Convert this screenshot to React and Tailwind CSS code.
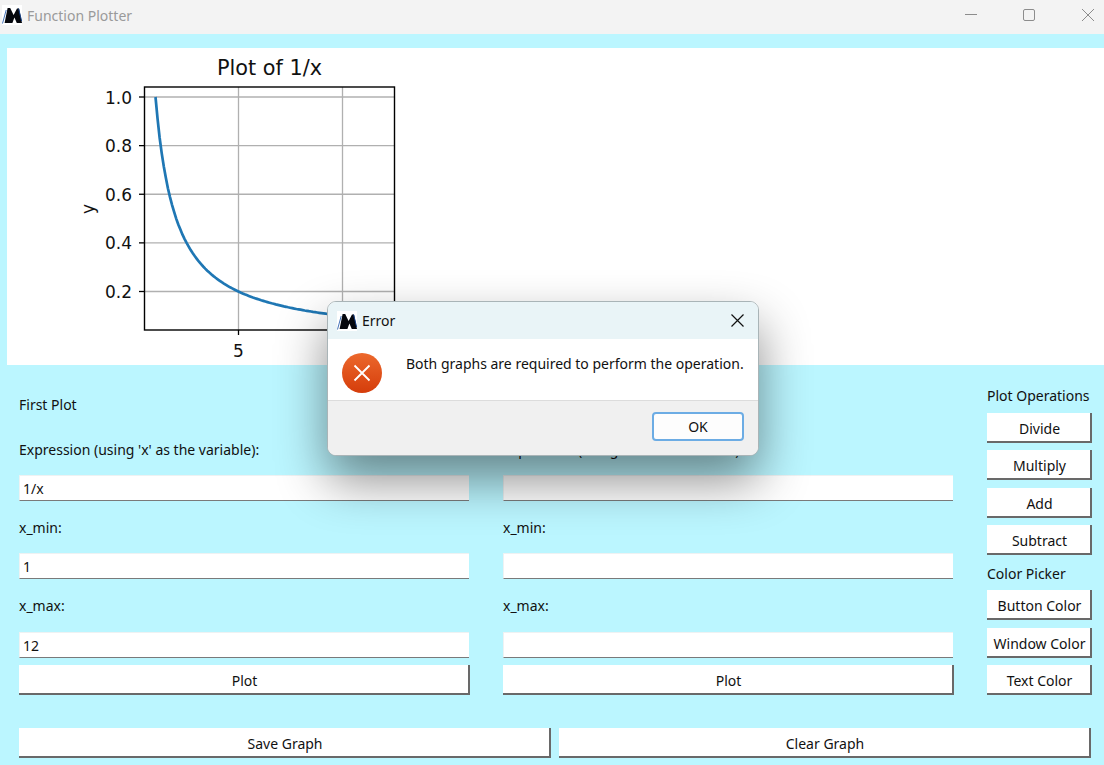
const Logo = ({ className }) => (
  <svg viewBox="0 0 20 20" className={className}>
    <rect width="20" height="20" fill="#fff" />
    <path d="M2.6 18 L5.6 3 L8.2 3 L11.6 10 L15 3.5 L17 3.5 L20 18 L14.8 18 L12.4 12.5 L10.4 18 Z" fill="#05070d" />
    <path d="M0.5 18.5 L4.2 5" stroke="#2f62b0" strokeWidth="0.9" fill="none" />
    <path d="M16.6 3.5 L19.6 16" stroke="#153f85" strokeWidth="1" fill="none" />
  </svg>
);

function Plot() {
  const pts = [];
  const px = (x) => 155.5 + ((x - 1) / 11) * 228;
  const py = (y) => 97 + ((1 - y) / 0.8) * 194.5;
  for (let x = 1; x <= 12; x += 0.1) pts.push(`${px(x).toFixed(1)},${py(1 / x).toFixed(1)}`);
  const ys = [1, 0.8, 0.6, 0.4, 0.2];
  return (
    <svg width="1097" height="317" viewBox="7 48 1097 317" className="block w-full h-full">
      <g stroke="#b0b0b0" strokeWidth="1.3">
        {ys.map((y) => <line key={y} x1="144" x2="394" y1={py(y)} y2={py(y)} />)}
        <line x1="238.5" x2="238.5" y1="87" y2="330" />
        <line x1="342.5" x2="342.5" y1="87" y2="330" />
      </g>
      <polyline points={pts.join(" ")} fill="none" stroke="#1f77b4" strokeWidth="2.7" />
      <rect x="144.5" y="87" width="250" height="243" fill="none" stroke="#000" strokeWidth="1.4" />
      <g stroke="#000" strokeWidth="1.3">
        {ys.map((y) => <line key={y} x1="139" x2="144" y1={py(y)} y2={py(y)} />)}
        <line x1="238.5" x2="238.5" y1="330" y2="335" />
        <line x1="342.5" x2="342.5" y1="330" y2="335" />
      </g>
      <g fontFamily="'DejaVu Sans', sans-serif" fontSize="17" fill="#111">
        {ys.map((y) => <text key={y} x="132" y={py(y) + 6.5} textAnchor="end">{y.toFixed(1)}</text>)}
        <text x="238.5" y="356.5" textAnchor="middle">5</text>
        <text x="94" y="209" transform="rotate(-90 94 209)" textAnchor="middle">y</text>
      </g>
      <text x="269.5" y="75" textAnchor="middle" fontFamily="'DejaVu Sans', sans-serif" fontSize="20.8" fill="#111">Plot of 1/x</text>
    </svg>
  );
}

const Btn = ({ children, className = "" }) => (
  <button className={`h-[30px] pl-[2px] pt-[2px] bg-white border-b-2 border-r-2 border-[#696969] text-[14px] text-[#111] flex items-center justify-center ${className}`}>{children}</button>
);

const Input = ({ value }) => (
  <div className="w-[450px] h-[26px] bg-white border-b border-[#7a7a7a] border-t border-t-[#eef2f3] border-l border-l-[#eef2f3] px-[3px] flex items-center text-[14px] text-[#111]">{value}</div>
);

const Label = ({ children, className = "" }) => (
  <div className={`flex items-center text-[14px] text-[#111] ${className}`}>{children}</div>
);

const PlotColumn = ({ title, expr, min, max }) => (
  <div className="w-[451px] flex flex-col">
    <Label className="h-[22px]">{title}</Label>
    <Label className="h-[22px] mt-[23px]">Expression (using 'x' as the variable):</Label>
    <div className="mt-[15px]"><Input value={expr} /></div>
    <Label className="h-[22px] mt-[15px]">x_min:</Label>
    <div className="mt-[15px]"><Input value={min} /></div>
    <Label className="h-[22px] mt-[15px]">x_max:</Label>
    <div className="mt-[16px]"><Input value={max} /></div>
    <Btn className="mt-[7px] w-full">Plot</Btn>
  </div>
);

export default function App() {
  return (
    <div className="relative w-[1104px] h-[765px] overflow-hidden bg-[#bbf6ff] flex flex-col" style={{ fontFamily: "'Noto Sans', sans-serif" }}>
      <header className="h-[34px] pb-[4px] bg-[#f3f3f3] flex items-center shrink-0">
        <Logo className="w-[20px] h-[20px] ml-[2px]" />
        <span className="ml-[5px] text-[14px] text-[#9a9a9a]">Function Plotter</span>
        <div className="ml-auto flex items-center text-[#8c8c8c]">
          <svg width="12" height="12" viewBox="0 0 12 12" className="mr-[46px]"><line x1="0" x2="12" y1="5.5" y2="5.5" stroke="currentColor" /></svg>
          <svg width="12" height="12" viewBox="0 0 12 12" className="mr-[47px]"><rect x="0.5" y="0.5" width="11" height="11" rx="1.5" fill="none" stroke="currentColor" /></svg>
          <svg width="12" height="12" viewBox="0 0 12 12" className="mr-[10px]"><path d="M0 0 L12 12 M12 0 L0 12" stroke="currentColor" fill="none" /></svg>
        </div>
      </header>

      <div className="ml-[7px] mt-[14px] h-[317px] bg-white shrink-0"><Plot /></div>

      <div className="flex pl-[19px] pt-[28px] gap-[33px] items-start">
        <PlotColumn title="First Plot" expr="1/x" min="1" max="12" />
        <PlotColumn title="Second Plot" expr="" min="" max="" />
        <div className="w-[105px] flex flex-col -mt-[9px]">
          <Label className="h-[22px]">Plot Operations</Label>
          <Btn className="mt-[7px]">Divide</Btn>
          <Btn className="mt-[7px]">Multiply</Btn>
          <Btn className="mt-[8px]">Add</Btn>
          <Btn className="mt-[7px]">Subtract</Btn>
          <Label className="h-[22px] mt-[7px]">Color Picker</Label>
          <Btn className="mt-[6px]">Button Color</Btn>
          <Btn className="mt-[8px]">Window Color</Btn>
          <Btn className="mt-[7px]">Text Color</Btn>
        </div>
      </div>

      <div className="flex pl-[19px] gap-[8px] mt-[33px]">
        <Btn className="w-[532px]">Save Graph</Btn>
        <Btn className="w-[532px]">Clear Graph</Btn>
      </div>

      <div className="absolute left-[327px] top-[301px] w-[432px] h-[155px] rounded-[9px] overflow-hidden border border-[#a9b4b7] bg-white shadow-[0_24px_50px_rgba(0,0,0,0.46)] flex flex-col">
        <div className="h-[37px] bg-[#e9f4f7] flex items-center shrink-0">
          <Logo className="w-[20px] h-[20px] ml-[9px]" />
          <span className="ml-[5px] text-[14px] text-[#111]">Error</span>
          <svg width="13" height="13" viewBox="0 0 13 13" className="ml-auto mr-[14px]"><path d="M0.5 0.5 L12.5 12.5 M12.5 0.5 L0.5 12.5" stroke="#111" strokeWidth="1.2" fill="none" /></svg>
        </div>
        <div className="h-[62px] flex items-start bg-white border-b border-[#dcdcdc] shrink-0">
          <svg width="40" height="40" viewBox="0 0 40 40" className="ml-[14px] mt-[14px] shrink-0">
            <defs>
              <linearGradient id="err" x1="0" y1="0" x2="0" y2="1">
                <stop offset="0" stopColor="#ec682c" />
                <stop offset="1" stopColor="#d53d0b" />
              </linearGradient>
            </defs>
            <circle cx="20" cy="20" r="20" fill="url(#err)" />
            <path d="M12.5 12.5 L27.5 27.5 M27.5 12.5 L12.5 27.5" stroke="#fff" strokeWidth="1.8" />
          </svg>
          <span className="ml-[24px] mt-[14px] text-[14px] text-[#111] whitespace-nowrap">Both graphs are required to perform the operation.</span>
        </div>
        <div className="flex-1 bg-[#f0f0f0] flex items-start justify-end pr-[14px] pt-[11px]">
          <button className="w-[92px] h-[29px] rounded-[4px] bg-[#fdfdfd] border-2 border-[#6cace4] text-[14px] text-[#111]">OK</button>
        </div>
      </div>
    </div>
  );
}
